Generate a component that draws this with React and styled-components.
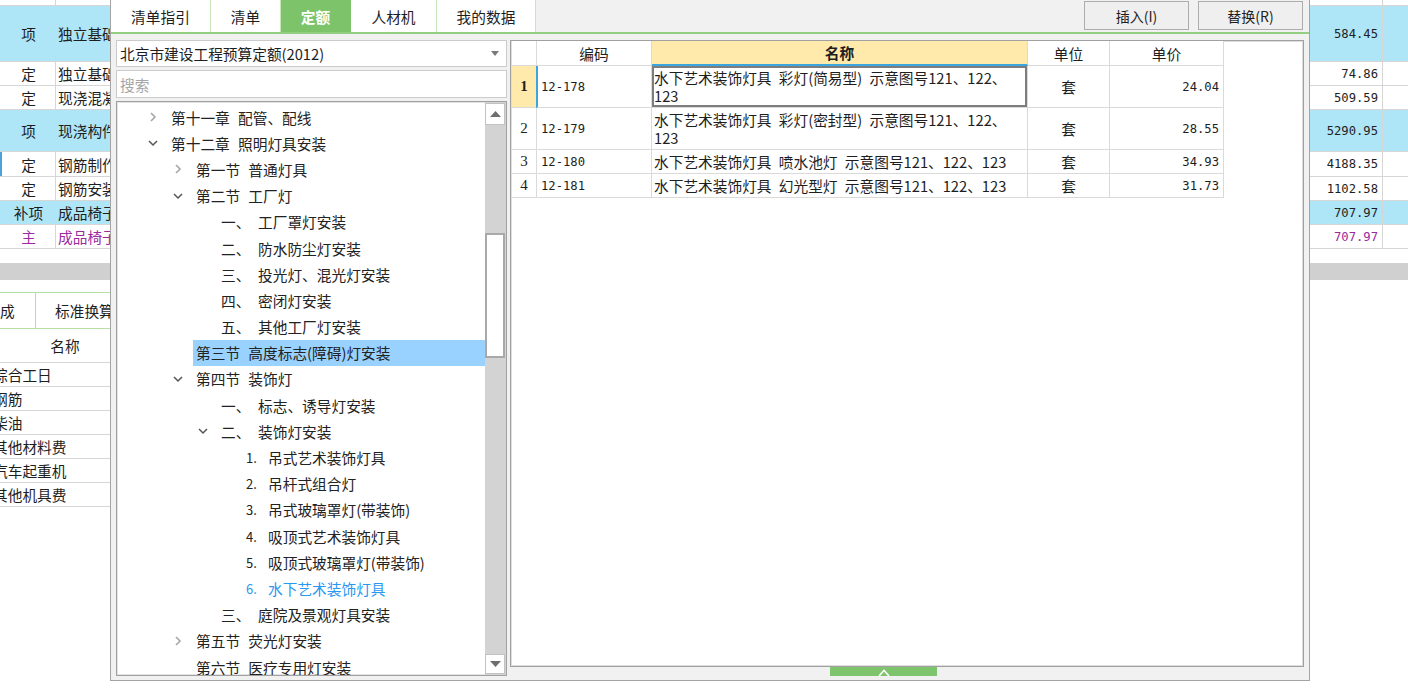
import React from "react";
import styled, { createGlobalStyle } from "styled-components";

const GlobalStyle = createGlobalStyle`
  html, body {
    margin: 0;
    padding: 0;
    background: #fff;
  }
  body {
    font-family: "Noto Sans CJK SC", "Noto Sans", sans-serif;
    font-size: 14.7px;
    color: #1e1e1e;
    overflow: hidden;
  }
  * { box-sizing: border-box; }
`;

const sheetRows = [
  { h: 6 },
  { h: 56, type: "项", name: "独立基础", value: "584.45", blue: true },
  { h: 24, type: "定", name: "独立基础", value: "74.86" },
  { h: 24, type: "定", name: "现浇混凝土", value: "509.59" },
  { h: 42, type: "项", name: "现浇构件", value: "5290.95", blue: true },
  { h: 25, type: "定", name: "钢筋制作", value: "4188.35", marked: true },
  { h: 24, type: "定", name: "钢筋安装", value: "1102.58" },
  { h: 24, type: "补项", name: "成品椅子", value: "707.97", blue: true },
  { h: 24, type: "主", name: "成品椅子", value: "707.97", purple: true },
];

const resourceRows = ["综合工日", "钢筋", "柴油", "其他材料费", "汽车起重机", "其他机具费"];

const tabs = [
  { label: "清单指引", w: 100 },
  { label: "清单", w: 70 },
  { label: "定额", w: 70, active: true },
  { label: "人材机", w: 86 },
  { label: "我的数据", w: 99 },
];

const treeItems = [
  { level: 0, arrow: "right", text: "第十一章 配管、配线" },
  { level: 0, arrow: "down", text: "第十二章 照明灯具安装" },
  { level: 1, arrow: "right", text: "第一节 普通灯具" },
  { level: 1, arrow: "down", text: "第二节 工厂灯" },
  { level: 2, prefix: "一、", text: "工厂罩灯安装" },
  { level: 2, prefix: "二、", text: "防水防尘灯安装" },
  { level: 2, prefix: "三、", text: "投光灯、混光灯安装" },
  { level: 2, prefix: "四、", text: "密闭灯安装" },
  { level: 2, prefix: "五、", text: "其他工厂灯安装" },
  { level: 1, text: "第三节 高度标志(障碍)灯安装", selected: true },
  { level: 1, arrow: "down", text: "第四节 装饰灯" },
  { level: 2, prefix: "一、", text: "标志、诱导灯安装" },
  { level: 2, arrow: "down", prefix: "二、", text: "装饰灯安装" },
  { level: 3, prefix: "1.", text: "吊式艺术装饰灯具" },
  { level: 3, prefix: "2.", text: "吊杆式组合灯" },
  { level: 3, prefix: "3.", text: "吊式玻璃罩灯(带装饰)" },
  { level: 3, prefix: "4.", text: "吸顶式艺术装饰灯具" },
  { level: 3, prefix: "5.", text: "吸顶式玻璃罩灯(带装饰)" },
  { level: 3, prefix: "6.", text: "水下艺术装饰灯具", current: true },
  { level: 2, prefix: "三、", text: "庭院及景观灯具安装" },
  { level: 1, arrow: "right", text: "第五节 荧光灯安装" },
  { level: 1, text: "第六节 医疗专用灯安装" },
];

const quotaRows = [
  { no: "1", code: "12-178", name: ["水下艺术装饰灯具 彩灯(简易型) 示意图号121、122、", "123"], unit: "套", price: "24.04", h: 42, active: true },
  { no: "2", code: "12-179", name: ["水下艺术装饰灯具 彩灯(密封型) 示意图号121、122、", "123"], unit: "套", price: "28.55", h: 42 },
  { no: "3", code: "12-180", name: ["水下艺术装饰灯具 喷水池灯 示意图号121、122、123"], unit: "套", price: "34.93", h: 24 },
  { no: "4", code: "12-181", name: ["水下艺术装饰灯具 幻光型灯 示意图号121、122、123"], unit: "套", price: "31.73", h: 24 },
];

const ChevronRight = () => (
  <svg width="10" height="10" viewBox="0 0 10 10">
    <path d="M3 1 L7 5 L3 9" fill="none" stroke="#a6a6a6" strokeWidth="1.6" />
  </svg>
);

const ChevronDown = () => (
  <svg width="10" height="10" viewBox="0 0 10 10">
    <path d="M1 3 L5 7 L9 3" fill="none" stroke="#555" strokeWidth="1.5" />
  </svg>
);

const App = () => {
  return (
    <Page>
      <GlobalStyle />
      {sheetRows.map((r, i) => (
        <SheetRow key={i} $h={r.h} $blue={r.blue} $purple={r.purple}>
          <TypeCell $marked={r.marked}>{r.type}</TypeCell>
          <NameCell>{r.name}</NameCell>
          <ValueCell>{r.value}</ValueCell>
          <ExtraCell />
        </SheetRow>
      ))}
      <Gap $h={14} />
      <Splitter />
      <Gap $h={12} />
      <LowerTabs>
        <LowerTab $w={36} $pad={0}>成</LowerTab>
        <LowerTab $w={110} $pad={19}>标准换算</LowerTab>
      </LowerTabs>
      <LowerHeader>
        <LowerHeaderCell>名称</LowerHeaderCell>
      </LowerHeader>
      {resourceRows.map((n) => (
        <LowerRow key={n}>
          <LowerName>{n}</LowerName>
        </LowerRow>
      ))}

      <Dialog>
        <TabBar>
          {tabs.map((t) => (
            <Tab key={t.label} $w={t.w} $active={t.active}>{t.label}</Tab>
          ))}
          <Actions>
            <ActionButton>插入(I)</ActionButton>
            <ActionButton>替换(R)</ActionButton>
          </Actions>
        </TabBar>
        <Body>
          <LeftCol>
            <Select>
              <span>北京市建设工程预算定额(2012)</span>
              <svg width="8" height="5" viewBox="0 0 8 5">
                <path d="M0 0 L8 0 L4 5 Z" fill="#7a7a7a" />
              </svg>
            </Select>
            <Search placeholder="搜索" />
            <TreeBox>
              <TreeList>
                {treeItems.map((it, i) => (
                  <TreeRow key={i} $level={it.level}>
                    <ArrowSlot>
                      {it.arrow === "right" && <ChevronRight />}
                      {it.arrow === "down" && <ChevronDown />}
                    </ArrowSlot>
                    <TreeLabel $selected={it.selected} $current={it.current}>
                      {it.prefix && <Prefix $level={it.level}>{it.prefix}</Prefix>}
                      {it.text}
                    </TreeLabel>
                  </TreeRow>
                ))}
              </TreeList>
              <ScrollBar>
                <ScrollButton>
                  <svg width="11" height="6" viewBox="0 0 11 6">
                    <path d="M0 6 L5.5 0 L11 6 Z" fill="#6e6e6e" />
                  </svg>
                </ScrollButton>
                <ScrollTrack>
                  <ScrollThumb style={{ marginTop: 108 }} />
                </ScrollTrack>
                <ScrollButton $bottom>
                  <svg width="11" height="6" viewBox="0 0 11 6">
                    <path d="M0 0 L5.5 6 L11 0 Z" fill="#6e6e6e" />
                  </svg>
                </ScrollButton>
              </ScrollBar>
            </TreeBox>
          </LeftCol>
          <RightCol>
            <TableBox>
              <Grid>
                <HeadCell />
                <HeadCell>编码</HeadCell>
                <HeadCell $highlight>名称</HeadCell>
                <HeadCell>单位</HeadCell>
                <HeadCell>单价</HeadCell>
                {quotaRows.map((r) => (
                  <React.Fragment key={r.no}>
                    <RowHead $h={r.h} $active={r.active}>{r.no}</RowHead>
                    <CodeCell $h={r.h} $active={r.active}>{r.code}</CodeCell>
                    <NameText $h={r.h} $active={r.active}>
                      <div>
                        {r.name.map((line, k) => (
                          <NameLine key={k}>{line}</NameLine>
                        ))}
                      </div>
                    </NameText>
                    <UnitCell $h={r.h}>{r.unit}</UnitCell>
                    <PriceCell $h={r.h}>{r.price}</PriceCell>
                  </React.Fragment>
                ))}
              </Grid>
            </TableBox>
            <HandleRow>
              <Handle>
                <svg width="12" height="7" viewBox="0 0 12 7">
                  <path d="M1 7 L6 1.5 L11 7" fill="none" stroke="#fff" strokeWidth="1.6" />
                </svg>
              </Handle>
            </HandleRow>
          </RightCol>
        </Body>
      </Dialog>
    </Page>
  );
};

const Page = styled.div`
  position: relative;
  width: 1408px;
  height: 698px;
  overflow: hidden;
  background: #fff;
`;

const SheetRow = styled.div`
  display: flex;
  height: ${(p) => p.$h}px;
  border-bottom: 1px solid #d6d6d6;
  background: ${(p) => (p.$blue ? "#aee5f7" : "#fff")};
  color: ${(p) => (p.$purple ? "#9b2aa0" : "#1e1e1e")};
`;

const TypeCell = styled.div`
  width: 56px;
  flex: none;
  display: flex;
  align-items: center;
  justify-content: center;
  border-right: 1px solid #d6d6d6;
  border-left: 2px solid ${(p) => (p.$marked ? "#4aa3dc" : "transparent")};
`;

const NameCell = styled.div`
  flex: 1;
  display: flex;
  align-items: center;
  padding-left: 2px;
  white-space: nowrap;
  overflow: hidden;
  border-right: 1px solid #d6d6d6;
`;

const ValueCell = styled.div`
  width: 91px;
  flex: none;
  display: flex;
  align-items: center;
  justify-content: flex-end;
  padding-right: 4px;
  font-family: "DejaVu Sans Mono", monospace;
  font-size: 12.2px;
  border-right: 1px solid #d6d6d6;
`;

const ExtraCell = styled.div`
  width: 25px;
  flex: none;
`;

const Gap = styled.div`
  height: ${(p) => p.$h}px;
`;

const Splitter = styled.div`
  height: 17px;
  background: #d0d0d0;
`;

const LowerTabs = styled.div`
  display: flex;
  height: 37px;
  width: 400px;
  border-top: 1px solid #b5e0a3;
  border-bottom: 1px solid #b5e0a3;
`;

const LowerTab = styled.div`
  width: ${(p) => p.$w}px;
  display: flex;
  align-items: center;
  padding-left: ${(p) => p.$pad}px;
  border-right: 1px solid #b5e0a3;
  white-space: nowrap;
`;

const LowerHeader = styled.div`
  display: flex;
  height: 34px;
  width: 400px;
  border-bottom: 1px solid #d6d6d6;
`;

const LowerHeaderCell = styled.div`
  width: 130px;
  display: flex;
  align-items: center;
  justify-content: center;
`;

const LowerRow = styled.div`
  display: flex;
  align-items: center;
  height: 24px;
  width: 400px;
  border-bottom: 1px solid #d6d6d6;
`;

const LowerName = styled.div`
  margin-left: -7px;
  white-space: nowrap;
`;

const Dialog = styled.div`
  position: absolute;
  left: 110px;
  top: 0;
  width: 1200px;
  height: 681px;
  display: flex;
  flex-direction: column;
  background: #f1f1f1;
  border: 1px solid #a4a4a4;
  border-top: none;
`;

const TabBar = styled.div`
  display: flex;
  height: 34px;
  flex: none;
  border-bottom: 2px solid #93cf80;
`;

const Tab = styled.div`
  width: ${(p) => p.$w}px;
  display: flex;
  align-items: center;
  justify-content: center;
  background: ${(p) => (p.$active ? "#7dc36a" : "#fff")};
  color: ${(p) => (p.$active ? "#fff" : "#1e1e1e")};
  font-weight: ${(p) => (p.$active ? 700 : 400)};
  border-right: 1px solid ${(p) => (p.$active ? "#7dc36a" : "#c6e6ba")};
`;

const Actions = styled.div`
  margin-left: auto;
  display: flex;
  align-items: flex-start;
  gap: 9px;
  padding: 1px 6px 0 0;
`;

const ActionButton = styled.div`
  width: 105px;
  height: 29px;
  display: flex;
  align-items: center;
  justify-content: center;
  background: #efefef;
  border: 1px solid #adadad;
  font-size: 14px;
`;

const Body = styled.div`
  flex: 1;
  min-height: 0;
  display: flex;
  gap: 3px;
  padding: 6px 5px 4px 5px;
`;

const LeftCol = styled.div`
  width: 391px;
  flex: none;
  display: flex;
  flex-direction: column;
  gap: 3px;
`;

const Select = styled.div`
  height: 27px;
  flex: none;
  display: flex;
  align-items: center;
  justify-content: space-between;
  padding: 0 7px 0 3px;
  background: #fff;
  border: 1px solid #cbcbcb;
`;

const Search = styled.input`
  height: 28px;
  flex: none;
  padding: 0 3px;
  background: #fff;
  border: 1px solid #cbcbcb;
  outline: none;
  font-family: "Noto Sans CJK SC", sans-serif;
  font-size: 14.7px;
  &::placeholder {
    color: #a6a6a6;
  }
`;

const TreeBox = styled.div`
  flex: 1;
  min-height: 0;
  display: flex;
  background: #fff;
  border: 1px solid #a0a0a0;
  box-shadow: inset 0 0 0 1px #e4e4e4;
  overflow: hidden;
`;

const TreeList = styled.div`
  flex: 1;
  padding-top: 2px;
  overflow: hidden;
`;

const TreeRow = styled.div`
  height: 26.2px;
  display: flex;
  align-items: center;
  padding-left: ${(p) => 29 + p.$level * 25}px;
  white-space: nowrap;
`;

const ArrowSlot = styled.div`
  width: 25px;
  flex: none;
  display: flex;
  align-items: center;
  padding-left: 2px;
`;

const TreeLabel = styled.div`
  flex: 1;
  height: 100%;
  display: flex;
  align-items: center;
  margin-left: -3px;
  padding-left: 3px;
  word-spacing: 5px;
  background: ${(p) => (p.$selected ? "#99d1ff" : "transparent")};
  color: ${(p) => (p.$current ? "#2a98f0" : "#222")};
`;

const Prefix = styled.span`
  display: inline-block;
  width: ${(p) => (p.$level >= 3 ? 22 : 37)}px;
  font-size: ${(p) => (p.$level >= 3 ? 13 : 14.7)}px;
`;

const ScrollBar = styled.div`
  width: 21px;
  flex: none;
  display: flex;
  flex-direction: column;
  padding: 1px 1px 1px 0;
  background: #d3d3d3;
`;

const ScrollButton = styled.div`
  height: ${(p) => (p.$bottom ? 20 : 22)}px;
  flex: none;
  display: flex;
  align-items: center;
  justify-content: center;
  background: #fff;
  border: 1px solid #c2c2c2;
`;

const ScrollTrack = styled.div`
  flex: 1;
  display: flex;
  flex-direction: column;
`;

const ScrollThumb = styled.div`
  height: 125px;
  background: #fff;
  border: 2px solid #a9a9a9;
`;

const RightCol = styled.div`
  flex: 1;
  display: flex;
  flex-direction: column;
`;

const TableBox = styled.div`
  flex: 1;
  background: #fff;
  border: 1px solid #a0a0a0;
  box-shadow: inset 0 0 0 1px #dedede;
  padding-left: 1px;
`;

const Grid = styled.div`
  display: grid;
  grid-template-columns: 25px 115px 376px 82px 114px;
  width: 712px;
`;

const cellBase = `
  display: flex;
  align-items: center;
  border-right: 1px solid #dadada;
  border-bottom: 1px solid #dadada;
`;

const HeadCell = styled.div`
  ${cellBase}
  height: 25px;
  justify-content: center;
  background: ${(p) => (p.$highlight ? "#ffeaab" : "#fff")};
  font-weight: ${(p) => (p.$highlight ? 700 : 400)};
  border-bottom: ${(p) => (p.$highlight ? "2px solid #3ba6dd" : "1px solid #dadada")};
`;

const RowHead = styled.div`
  ${cellBase}
  height: ${(p) => p.$h}px;
  justify-content: center;
  background: ${(p) => (p.$active ? "#ffeaab" : "#fff")};
  font-family: "Liberation Serif", serif;
  font-size: 15px;
  font-weight: ${(p) => (p.$active ? 700 : 400)};
`;

const CodeCell = styled.div`
  ${cellBase}
  height: ${(p) => p.$h}px;
  padding-left: 3px;
  border-left: 2px solid ${(p) => (p.$active ? "#3ba6dd" : "transparent")};
  margin-left: -1px;
  font-family: "DejaVu Sans Mono", monospace;
  font-size: 12.2px;
`;

const NameText = styled.div`
  ${cellBase}
  height: ${(p) => p.$h}px;
  padding-left: 2px;
  white-space: nowrap;
  word-spacing: 4px;
  box-shadow: ${(p) => (p.$active ? "inset 0 0 0 2px #7d7d7d" : "none")};
`;

const NameLine = styled.div`
  line-height: 18px;
`;

const UnitCell = styled.div`
  ${cellBase}
  height: ${(p) => p.$h}px;
  justify-content: center;
`;

const PriceCell = styled.div`
  ${cellBase}
  height: ${(p) => p.$h}px;
  justify-content: flex-end;
  padding-right: 4px;
  font-family: "DejaVu Sans Mono", monospace;
  font-size: 12.2px;
`;

const HandleRow = styled.div`
  height: 9px;
  flex: none;
  display: flex;
  padding-left: 320px;
`;

const Handle = styled.div`
  width: 107px;
  height: 9px;
  display: flex;
  align-items: flex-end;
  justify-content: center;
  background: #7ec46d;
`;

export default App;
